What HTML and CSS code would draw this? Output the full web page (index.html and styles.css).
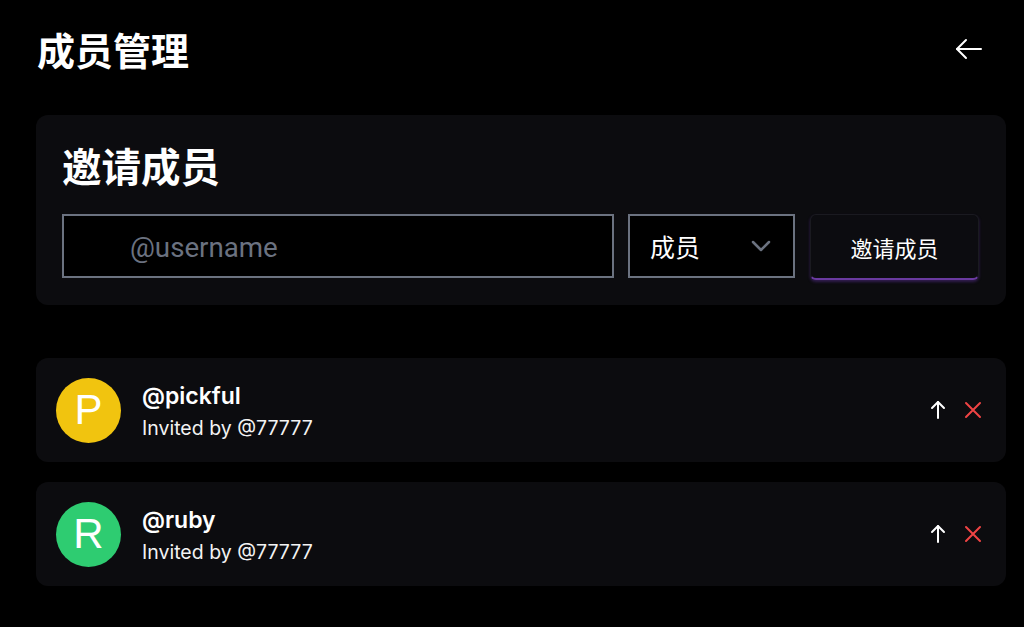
FILE: index.html
```html
<!DOCTYPE html>
<html lang="zh">
<head>
<meta charset="utf-8">
<link rel="stylesheet" href="styles.css">
</head>
<body>
<div class="page">
  <header class="top">
    <h1 class="title">成员管理</h1>
    <button class="back" aria-label="back">
      <svg width="30" height="30" viewBox="0 0 30 30" fill="none" stroke="#fff" stroke-width="2" stroke-linecap="round" stroke-linejoin="round"><path d="M27 15H3"/><path d="M12 6L3 15l9 9"/></svg>
    </button>
  </header>

  <section class="card invite">
    <h2 class="subtitle">邀请成员</h2>
    <div class="form">
      <div class="input"><span class="ph">@username</span></div>
      <div class="select"><span>成员</span>
        <svg width="20" height="12" viewBox="0 0 20 12" fill="none" stroke="#6b7280" stroke-width="2.5" stroke-linecap="round" stroke-linejoin="round"><path d="M2 2l8 8 8-8"/></svg>
      </div>
      <button class="btn">邀请成员</button>
    </div>
  </section>

  <div class="members">
    <div class="card member">
      <div class="avatar yellow">P</div>
      <div class="info">
        <div class="name">@pickful</div>
        <div class="by">Invited by @77777</div>
      </div>
      <div class="actions">
        <svg width="16" height="20" viewBox="0 0 16 20" fill="none" stroke="#fff" stroke-width="2" stroke-linecap="round" stroke-linejoin="round"><path d="M8 18V2"/><path d="M2 8l6-6 6 6"/></svg>
        <svg width="18" height="18" viewBox="0 0 18 18" fill="none" stroke="#ef4444" stroke-width="2" stroke-linecap="round"><path d="M2 2l14 14M16 2L2 16"/></svg>
      </div>
    </div>
    <div class="card member">
      <div class="avatar green">R</div>
      <div class="info">
        <div class="name">@ruby</div>
        <div class="by">Invited by @77777</div>
      </div>
      <div class="actions">
        <svg width="16" height="20" viewBox="0 0 16 20" fill="none" stroke="#fff" stroke-width="2" stroke-linecap="round" stroke-linejoin="round"><path d="M8 18V2"/><path d="M2 8l6-6 6 6"/></svg>
        <svg width="18" height="18" viewBox="0 0 18 18" fill="none" stroke="#ef4444" stroke-width="2" stroke-linecap="round"><path d="M2 2l14 14M16 2L2 16"/></svg>
      </div>
    </div>
  </div>
</div>
</body>
</html>
```

FILE: styles.css
```css
* { box-sizing: border-box; }
html, body { margin: 0; padding: 0; background: #000; }
body {
  color: #fff;
  font-family: Inter, "Noto Sans CJK SC", sans-serif;
  width: 1024px;
  height: 627px;
  overflow: hidden;
}
.page { padding: 0 18px 0 36px; }
.top {
  display: flex;
  align-items: center;
  justify-content: space-between;
  height: 98px;
  padding-top: 0;
}
.title {
  margin: 0;
  font-family: "Noto Sans CJK SC", sans-serif;
  font-size: 38px;
  font-weight: 700;
  line-height: 1;
  margin-left: 1px;
}
.back {
  background: none;
  border: 0;
  padding: 0;
  margin-right: 22px;
  display: flex;
}
.card {
  background: #0c0c0f;
  border-radius: 12px;
}
.invite {
  margin-top: 17px;
  padding: 26px 26px 25px 26px;
}
.subtitle {
  margin: 0 0 26px 0;
  font-family: "Noto Sans CJK SC", sans-serif;
  font-size: 39.5px;
  font-weight: 700;
  line-height: 47px;
}
.form {
  display: flex;
  gap: 14px;
  align-items: flex-start;
}
.input {
  flex: 0 0 552px;
  height: 64px;
  border: 2px solid #6b7280;
  background: #000;
  display: flex;
  align-items: center;
  padding-left: 66px;
  padding-top: 3px;
}
.ph {
  font-family: Roboto, sans-serif;
  font-size: 27.7px;
  color: #6b7280;
}
.select {
  flex: 0 0 167px;
  height: 64px;
  border: 2px solid #6b7280;
  background: #000;
  display: flex;
  align-items: center;
  justify-content: space-between;
  padding: 0 22px 0 20px;
  font-family: "Noto Sans CJK SC", sans-serif;
  font-size: 25px;
}
.btn {
  margin-left: 1px;
  width: 169px;
  height: 66px;
  background: #0c0c10;
  border: 1px solid #1a1a20;
  border-bottom: 2px solid #6a3aa0;
  border-radius: 6px;
  box-shadow: 0 2px 3px rgba(120, 60, 200, 0.35);
  color: #fff;
  font-family: "Noto Sans CJK SC", sans-serif;
  font-size: 22px;
  padding: 0;
}
.members {
  margin-top: 53px;
  display: flex;
  flex-direction: column;
  gap: 20px;
}
.member {
  height: 104px;
  display: flex;
  align-items: center;
  padding: 0 24px 0 20px;
}
.avatar {
  width: 65px;
  height: 65px;
  border-radius: 50%;
  display: flex;
  align-items: center;
  justify-content: center;
  font-family: "Liberation Sans", Arial, sans-serif;
  font-size: 42px;
  color: #fff;
  flex: none;
}
.yellow { background: #f1c40f; }
.green { background: #2ecc71; }
.info {
  margin-left: 21px;
  flex: 1;
  padding-top: 2px;
}
.name {
  font-size: 23px;
  font-weight: 600;
  line-height: 28px;
}
.by {
  font-size: 19.5px;
  line-height: 26px;
  margin-top: 5px;
  color: #f3f3f3;
}
.actions {
  display: flex;
  align-items: center;
  gap: 18px;
}
```
